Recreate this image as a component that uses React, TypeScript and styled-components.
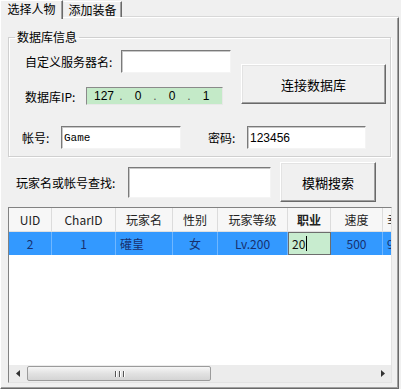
import React from 'react';
import styled, { createGlobalStyle } from 'styled-components';

const GlobalStyle = createGlobalStyle`
  html, body {
    margin: 0;
    padding: 0;
    background: #f0f0f0;
  }
  body {
    font-family: "Noto Sans CJK SC", "Noto Sans", sans-serif;
    font-size: 12px;
    color: #000;
  }
`;

const Window = styled.div`
  width: 401px;
  height: 389px;
  overflow: hidden;
  background: #f0f0f0;
`;

const TabBar = styled.div`
  display: flex;
  align-items: flex-end;
  height: 17px;
  position: relative;
  z-index: 2;
`;

const Tab = styled.div<{ $active?: boolean; $width: number }>`
  box-sizing: border-box;
  width: ${p => p.$width}px;
  height: ${p => (p.$active ? 19 : 16)}px;
  margin-bottom: ${p => (p.$active ? -2 : 0)}px;
  background: #f0f0f0;
  border-top: 1px solid #fff;
  border-left: 1px solid ${p => (p.$active ? '#fff' : '#e8e8e8')};
  border-right: 1px solid #696969;
  box-shadow: inset -1px 0 0 #a0a0a0;
  display: flex;
  align-items: ${p => (p.$active ? 'flex-start' : 'center')};
  justify-content: center;
  font-size: 12px;
  line-height: 16px;
`;

const Panel = styled.div`
  box-sizing: border-box;
  width: 399px;
  height: 372px;
  border: 1px solid;
  border-color: #fff #696969 #696969 #fff;
  box-shadow: inset -1px -1px 0 #a0a0a0, 0 -1px 0 #d8d8d8;
  display: flex;
  flex-direction: column;
`;

const Group = styled.fieldset`
  box-sizing: border-box;
  margin: 12px 0 0 7px;
  width: 383px;
  padding: 6px 0 7px 0;
  border: 1px solid #d0d0d0;
  box-shadow: 1px 1px 0 #fff, inset 1px 1px 0 #fff;
  min-width: 0;
`;

const Legend = styled.legend`
  margin-left: 6px;
  padding: 0 2px;
  font-size: 12px;
  line-height: 14px;
`;

const TopArea = styled.div`
  display: flex;
  padding-left: 16px;
`;

const LeftCol = styled.div`
  display: flex;
  flex-direction: column;
  gap: 14px;
`;

const Row = styled.div<{ $pad?: number; $top?: number }>`
  display: flex;
  align-items: center;
  padding-left: ${p => p.$pad || 0}px;
  margin-top: ${p => p.$top || 0}px;
`;

const Label = styled.span<{ $width: number; $gap?: number }>`
  width: ${p => p.$width}px;
  margin-left: ${p => p.$gap || 0}px;
  font-size: 12px;
  white-space: nowrap;
  flex-shrink: 0;
`;

const TextBox = styled.div<{ $width: number; $height: number; $mono?: boolean }>`
  box-sizing: border-box;
  width: ${p => p.$width}px;
  height: ${p => p.$height}px;
  background: #fff;
  border: 1px solid;
  border-color: #7a7a7a #f4f4f4 #f4f4f4 #7a7a7a;
  box-shadow: inset 1px 1px 0 #c8c8c8;
  display: flex;
  align-items: center;
  padding-left: 2px;
  font-family: ${p => (p.$mono ? '"Liberation Mono", monospace' : '"Liberation Sans", sans-serif')};
  font-size: ${p => (p.$mono ? 11 : 12)}px;
  flex-shrink: 0;
`;

const IpBox = styled.div`
  box-sizing: border-box;
  width: 137px;
  height: 18px;
  background: #c4eac8;
  border: 1px solid;
  border-color: #8a8a8a #e8e8e8 #e8e8e8 #8a8a8a;
  display: flex;
  align-items: center;
  padding-left: 4px;
  font-family: "Liberation Sans", sans-serif;
  font-size: 12px;
`;

const Octet = styled.span`
  width: 26px;
  text-align: center;
`;

const Dot = styled.span`
  width: 8px;
  text-align: center;
  color: #555;
`;

const Button = styled.div<{ $width: number; $height: number; $gap?: number; $top?: number }>`
  box-sizing: border-box;
  width: ${p => p.$width}px;
  height: ${p => p.$height}px;
  margin-left: ${p => p.$gap || 0}px;
  margin-top: ${p => p.$top || 0}px;
  background: #f0f0f0;
  border: 1px solid;
  border-color: #fff #696969 #696969 #fff;
  box-shadow: inset -1px -1px 0 #a0a0a0, inset 1px 1px 0 #e3e3e3;
  display: flex;
  align-items: center;
  justify-content: center;
  font-size: 13px;
  flex-shrink: 0;
`;

const Grid = styled.div`
  box-sizing: border-box;
  margin: 5px 0 0 7px;
  width: 384px;
  height: 176px;
  background: #fff;
  border: 1px solid;
  border-color: #828282 #e3e3e3 #e3e3e3 #828282;
  display: flex;
  flex-direction: column;
  overflow: hidden;
`;

const GridRow = styled.div<{ $header?: boolean }>`
  display: flex;
  height: 23px;
  background: ${p => (p.$header ? '#f7f7f7' : '#3399ff')};
  border-bottom: ${p => (p.$header ? '1px solid #e0e0e0' : 'none')};
  flex-shrink: 0;
  white-space: nowrap;
  overflow: hidden;
`;

const Cell = styled.div<{ $width: number; $header?: boolean; $bold?: boolean; $align?: string }>`
  box-sizing: border-box;
  width: ${p => p.$width}px;
  flex-shrink: 0;
  display: flex;
  align-items: center;
  justify-content: ${p => p.$align || 'center'};
  padding-left: ${p => (p.$align === 'flex-start' ? 4 : 0)}px;
  border-right: 1px solid ${p => (p.$header ? '#dcdcdc' : 'rgba(255,255,255,0.3)')};
  font-size: 12px;
  font-weight: ${p => (p.$bold ? 700 : 400)};
  color: ${p => (p.$header ? '#222' : '#17306e')};
`;

const EditCell = styled.div<{ $width: number }>`
  box-sizing: border-box;
  width: ${p => p.$width}px;
  flex-shrink: 0;
  background: #c8eccf;
  border: 1px solid #6d6d6d;
  display: flex;
  align-items: center;
  padding-left: 3px;
  font-size: 12px;
  color: #111;
`;

const Caret = styled.span`
  display: inline-block;
  width: 1px;
  height: 15px;
  background: #000;
  margin-left: 1px;
`;

const Body = styled.div`
  flex: 1;
`;

const HScroll = styled.div`
  display: flex;
  align-items: center;
  height: 17px;
  background: #ececec;
  flex-shrink: 0;
`;

const ArrowBtn = styled.div`
  width: 18px;
  height: 17px;
  display: flex;
  align-items: center;
  justify-content: center;
  flex-shrink: 0;
`;

const Thumb = styled.div`
  box-sizing: border-box;
  width: 184px;
  height: 15px;
  border: 1px solid #9b9b9b;
  border-radius: 2px;
  background: linear-gradient(#f6f6f6, #e2e2e2 50%, #d4d4d4);
  display: flex;
  align-items: center;
  justify-content: center;
  gap: 1px;
  flex-shrink: 0;
`;

const Grip = styled.span`
  width: 1px;
  height: 6px;
  background: #555;
  box-shadow: 1px 0 0 #fff;
  margin: 0 1px;
`;

const Track = styled.div`
  flex: 1;
`;

const columns = [
  { title: 'UID', width: 43, value: '2' },
  { title: 'CharID', width: 64, value: '1' },
  { title: '玩家名', width: 57, value: '礶皇', align: 'flex-start' },
  { title: '性别', width: 45, value: '女' },
  { title: '玩家等级', width: 70, value: 'Lv.200' },
  { title: '职业', width: 43, value: '20', bold: true, edit: true },
  { title: '速度', width: 52, value: '500' },
  { title: '幸运', width: 60, value: '999', align: 'flex-start' },
];

export default function App() {
  return (
    <Window>
      <GlobalStyle />
      <TabBar>
        <Tab $active $width={63}>选择人物</Tab>
        <Tab $width={59}>添加装备</Tab>
      </TabBar>
      <Panel>
        <Group>
          <Legend>数据库信息</Legend>
          <TopArea>
            <LeftCol>
              <Row>
                <Label $width={96}>自定义服务器名:</Label>
                <TextBox $width={110} $height={23} />
              </Row>
              <Row>
                <Label $width={61}>数据库IP:</Label>
                <IpBox>
                  <Octet>127</Octet>
                  <Dot>.</Dot>
                  <Octet>0</Octet>
                  <Dot>.</Dot>
                  <Octet>0</Octet>
                  <Dot>.</Dot>
                  <Octet>1</Octet>
                </IpBox>
              </Row>
            </LeftCol>
            <Button $width={145} $height={40} $gap={10} $top={14}>连接数据库</Button>
          </TopArea>
          <Row $pad={13} $top={21}>
            <Label $width={39}>帐号:</Label>
            <TextBox $width={120} $height={23} $mono>Game</TextBox>
            <Label $width={39} $gap={27}>密码:</Label>
            <TextBox $width={119} $height={23}>123456</TextBox>
          </Row>
        </Group>
        <Row $pad={15} $top={5}>
          <Label $width={112}>玩家名或帐号查找:</Label>
          <TextBox $width={143} $height={31} />
          <Button $width={96} $height={40} $gap={9}>模糊搜索</Button>
        </Row>
        <Grid>
          <GridRow $header>
            {columns.map(c => (
              <Cell key={c.title} $width={c.width} $header $bold={c.bold} $align={c.title === '幸运' ? 'flex-start' : undefined}>
                {c.title}
              </Cell>
            ))}
          </GridRow>
          <GridRow>
            {columns.map(c =>
              c.edit ? (
                <EditCell key={c.title} $width={c.width}>{c.value}<Caret /></EditCell>
              ) : (
                <Cell key={c.title} $width={c.width} $align={c.align}>{c.value}</Cell>
              )
            )}
          </GridRow>
          <Body />
          <HScroll>
            <ArrowBtn>
              <svg width="5" height="7" viewBox="0 0 5 7"><path d="M4 0 L0 3.5 L4 7 Z" fill="#333" /></svg>
            </ArrowBtn>
            <Thumb>
              <Grip /><Grip /><Grip />
            </Thumb>
            <Track />
            <ArrowBtn>
              <svg width="5" height="7" viewBox="0 0 5 7"><path d="M1 0 L5 3.5 L1 7 Z" fill="#333" /></svg>
            </ArrowBtn>
          </HScroll>
        </Grid>
      </Panel>
    </Window>
  );
}
